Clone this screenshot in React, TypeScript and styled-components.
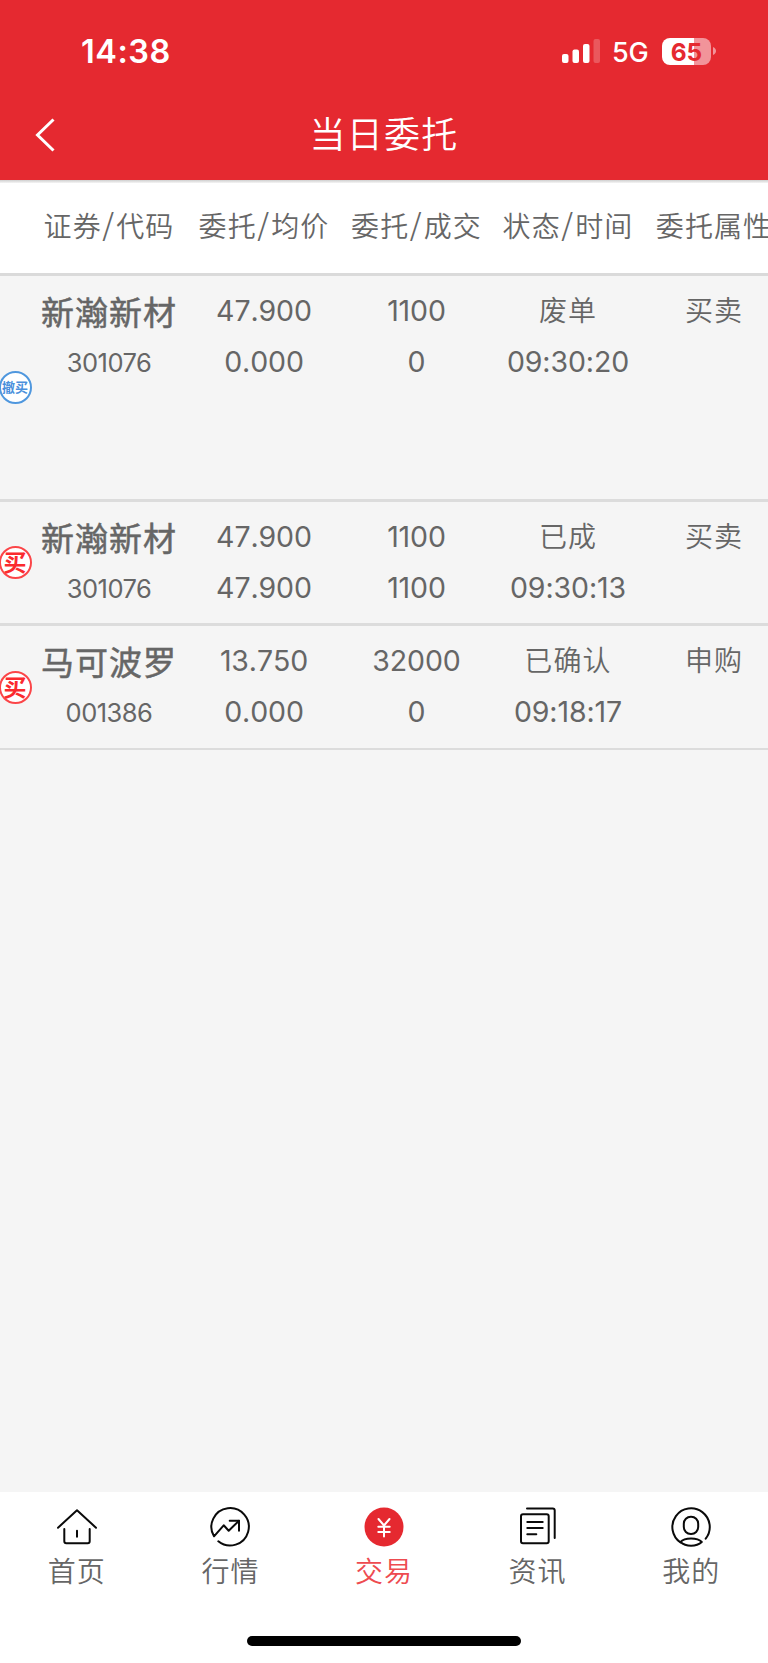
import React from "react";
import styled, { createGlobalStyle, css } from "styled-components";

const GlobalStyle = createGlobalStyle`
  * { box-sizing: border-box; }
  html, body { margin: 0; padding: 0; background: #f5f5f5; }
  body { font-family: "Inter", "Noto Sans CJK SC", sans-serif; color: #666; overflow: hidden; }
`;

const Screen = styled.div`
  width: 768px;
  height: 1663px;
  display: flex;
  flex-direction: column;
  overflow: hidden;
  background: #f5f5f5;
`;

const Header = styled.header`
  height: 180px;
  flex: none;
  background: #e52930;
  color: #fff;
`;

const StatusBar = styled.div`
  height: 102px;
  padding: 0 52px 0 81px;
  display: flex;
  align-items: center;
  justify-content: space-between;
`;

const Clock = styled.span`
  margin-top: 2px;
  font-size: 32.5px;
  font-weight: 600;
  letter-spacing: 0.5px;
  line-height: 40px;
`;

const StatusIcons = styled.div`
  display: flex;
  align-items: center;
`;

const Network = styled.span`
  width: 37px;
  margin: 3px 13px 0 11px;
  font-size: 27px;
  font-weight: 450;
  line-height: 32px;
  letter-spacing: -0.2px;
`;

const Battery = styled.div`
  width: 49px;
  height: 27px;
  border-radius: 8px;
  background: linear-gradient(90deg, #fff 0 65%, #f2949a 65%);
  color: #e52930;
  font-size: 24.5px;
  font-weight: 700;
  line-height: 28px;
  text-align: center;
`;

const TitleBar = styled.div`
  height: 66px;
  display: grid;
  grid-template-columns: 92px 1fr 92px;
  align-items: center;
`;

const BackButton = styled.button`
  height: 66px;
  padding: 0 0 0 35px;
  border: 0;
  background: none;
  display: flex;
  align-items: center;
`;

const Title = styled.h1`
  margin: 0;
  font-size: 36px;
  font-weight: 350;
  letter-spacing: 1.2px;
  line-height: 67px;
  height: 66px;
  text-align: center;
`;

const columns = css`
  display: grid;
  grid-template-columns: 31px 156px 154px 151px 152px 140px;
`;

const TableHead = styled.div`
  ${columns}
  flex: none;
  height: 96px;
  padding-top: 1px;
  background: linear-gradient(#cfcfcf, #f5f5f5 3px, #fff 3px);
  border-bottom: 3px solid #dadada;
  align-items: center;
`;

const HeadCell = styled.div`
  height: 40px;
  font-size: 28px;
  font-weight: 350;
  letter-spacing: 1.1px;
  line-height: 40px;
  text-align: center;
  white-space: nowrap;
`;

const Slash = styled.span`
  font-family: "Noto Sans CJK SC", sans-serif;
  font-size: 30px;
  line-height: 1;
  vertical-align: 1.5px;
  margin: 0 1px 0 0.6px;
`;

const Row = styled.div<{ $height: number }>`
  ${columns}
  flex: none;
  height: ${(p) => p.$height}px;
  border-bottom: 3px solid #dcdcdc;

  &:last-of-type {
    border-bottom-width: 2px;
  }
`;

const BadgeCell = styled.div`
  display: flex;
  align-items: center;
  margin-left: -1.5px;
`;

const Badge = styled.span<{ $cancel: boolean }>`
  flex: none;
  width: 33px;
  height: 33px;
  border-radius: 50%;
  border: 2px solid ${(p) => (p.$cancel ? "#4f97de" : "#fb4548")};
  background: #fff;
  color: ${(p) => (p.$cancel ? "#4a90dc" : "#fb2a2e")};
  font-size: ${(p) => (p.$cancel ? 13 : 23)}px;
  font-weight: 700;
  line-height: ${(p) => (p.$cancel ? 29 : 30)}px;
  display: flex;
  justify-content: center;
  white-space: nowrap;
`;

const Cell = styled.div`
  padding-top: 9px;
  display: flex;
  flex-direction: column;
  align-items: center;
  font-size: 28.5px;
  line-height: 51px;
  white-space: nowrap;
`;

const Value = styled.span`
  font-weight: 400;
  font-kerning: none;
  letter-spacing: -0.1px;
`;

const Label = styled.span`
  height: 51px;
  padding-top: 1px;
  font-size: 28px;
  font-weight: 350;
  letter-spacing: 1.1px;
`;

const Name = styled.span`
  padding-top: 1px;
  font-size: 33px;
  letter-spacing: 1px;
  line-height: 54px;
  -webkit-text-stroke: 0.5px #666;
`;

const Code = styled.span`
  font-size: 25.5px;
  font-weight: 400;
  line-height: 46px;
  letter-spacing: -0.5px;
`;

const Spacer = styled.section`
  flex: 1;
`;

const TabBar = styled.nav`
  flex: none;
  height: 144px;
  background: #fff;
  display: grid;
  grid-template-columns: repeat(5, 1fr);
`;

const Tab = styled.div<{ $active?: boolean }>`
  height: 120px;
  margin-top: 15px;
  display: flex;
  flex-direction: column;
  align-items: center;
  font-size: 28px;
  font-weight: 350;
  letter-spacing: 1px;
  line-height: 51px;
  color: ${(p) => (p.$active ? "#ee4b50" : "#666")};
`;

const IconBox = styled.svg`
  width: 40px;
  height: 40px;
  flex: none;
  fill: none;
  stroke: #0a0a0a;
  stroke-width: 2;
  stroke-linecap: round;
  stroke-linejoin: round;
`;

const HomeArea = styled.footer`
  flex: none;
  height: 27px;
  background: #fff;
  display: flex;
  justify-content: center;
`;

const HomeIndicator = styled.div`
  width: 274px;
  height: 10px;
  border-radius: 5px;
  background: #000;
`;

const heads: [string, string?][] = [["证券", "代码"], ["委托", "均价"], ["委托", "成交"], ["状态", "时间"], ["委托属性"]];

const orders = [
  { cancel: true, name: "新瀚新材", code: "301076", price: "47.900", avg: "0.000", qty: "1100", done: "0", state: "废单", time: "09:30:20", kind: "买卖", height: 226 },
  { cancel: false, name: "新瀚新材", code: "301076", price: "47.900", avg: "47.900", qty: "1100", done: "1100", state: "已成", time: "09:30:13", kind: "买卖", height: 124 },
  { cancel: false, name: "马可波罗", code: "001386", price: "13.750", avg: "0.000", qty: "32000", done: "0", state: "已确认", time: "09:18:17", kind: "申购", height: 124 },
];

const tabs = [
  {
    label: "首页",
    icon: (
      <>
        <path d="M1 20.7 20 3.3l19 17.4" />
        <path d="M7.3 22v12.3a2 2 0 0 0 2 2h21.4a2 2 0 0 0 2-2V22M20 23.7v6" />
      </>
    ),
  },
  {
    label: "行情",
    icon: (
      <>
        <path d="M8.3 34.3A18.7 18.7 0 1 0 4 29.3l9.7-11 5 5.4L29 13.7" />
        <path d="M19.7 13.7H29v10" />
      </>
    ),
  },
  {
    label: "交易",
    active: true,
    icon: (
      <>
        <circle cx="20" cy="20" r="19.5" fill="#e52930" stroke="none" />
        <path stroke="#fff" d="M14.5 12 20 18.5l5.5-6.5M20 18.5v11M14.3 19.7h11.4M14.3 25h11.4" />
      </>
    ),
  },
  {
    label: "资讯",
    icon: (
      <>
        <path d="M9 1.5h25.7a2 2 0 0 1 2 2V31" />
        <rect x="3" y="7.3" width="27.7" height="29" rx="2" />
        <path d="M9.3 15h15.4M9.3 21h15.4M9.3 27.3h9" />
      </>
    ),
  },
  {
    label: "我的",
    icon: (
      <>
        <path d="M34.7 31.7A18.7 18.7 0 1 0 9.5 35.5" />
        <rect x="12.8" y="9.7" width="14.4" height="17.3" rx="7" />
        <path d="M9.5 35c4-4.7 17-4.7 21.3 0-5.5 5-16 5-21.3 0z" />
      </>
    ),
  },
];

export default function App() {
  return (
    <Screen>
      <GlobalStyle />
      <Header>
        <StatusBar>
          <Clock>14:38</Clock>
          <StatusIcons>
            <svg width="39" height="26" viewBox="0 0 39 26" fill="#fff">
              <rect x="0" y="16" width="6.5" height="9" rx="2" />
              <rect x="10.5" y="11.5" width="6.5" height="13.5" rx="2" />
              <rect x="21" y="6" width="6.5" height="19" rx="2" />
              <rect x="31.5" y="1" width="6.5" height="24" rx="2" opacity="0.22" />
            </svg>
            <Network>5G</Network>
            <Battery>65</Battery>
            <svg width="5" height="8" viewBox="0 0 5 8" fill="#f2949a">
              <path d="M2 0c4 1.5 4 6.5 0 8z" />
            </svg>
          </StatusIcons>
        </StatusBar>
        <TitleBar>
          <BackButton aria-label="返回">
            <svg width="20" height="34" viewBox="0 0 20 34" fill="none" stroke="#fff" strokeWidth="3">
              <path d="M18.5 1.5 2.5 17l16 15.5" />
            </svg>
          </BackButton>
          <Title>当日委托</Title>
        </TitleBar>
      </Header>
      <TableHead>
        <span />
        {heads.map(([a, b], i) => (
          <HeadCell key={i}>
            {a}
            {b && <Slash>/</Slash>}
            {b}
          </HeadCell>
        ))}
      </TableHead>
      {orders.map((o, i) => (
        <Row key={i} $height={o.height}>
          <BadgeCell>
            <Badge $cancel={o.cancel}>{o.cancel ? "撤买" : "买"}</Badge>
          </BadgeCell>
          <Cell>
            <Name>{o.name}</Name>
            <Code>{o.code}</Code>
          </Cell>
          <Cell>
            <Value>{o.price}</Value>
            <Value>{o.avg}</Value>
          </Cell>
          <Cell>
            <Value>{o.qty}</Value>
            <Value>{o.done}</Value>
          </Cell>
          <Cell>
            <Label>{o.state}</Label>
            <Value>{o.time}</Value>
          </Cell>
          <Cell>
            <Label>{o.kind}</Label>
          </Cell>
        </Row>
      ))}
      <Spacer />
      <TabBar>
        {tabs.map((t) => (
          <Tab key={t.label} $active={t.active}>
            <IconBox viewBox="0 0 40 40">{t.icon}</IconBox>
            {t.label}
          </Tab>
        ))}
      </TabBar>
      <HomeArea>
        <HomeIndicator />
      </HomeArea>
    </Screen>
  );
}
